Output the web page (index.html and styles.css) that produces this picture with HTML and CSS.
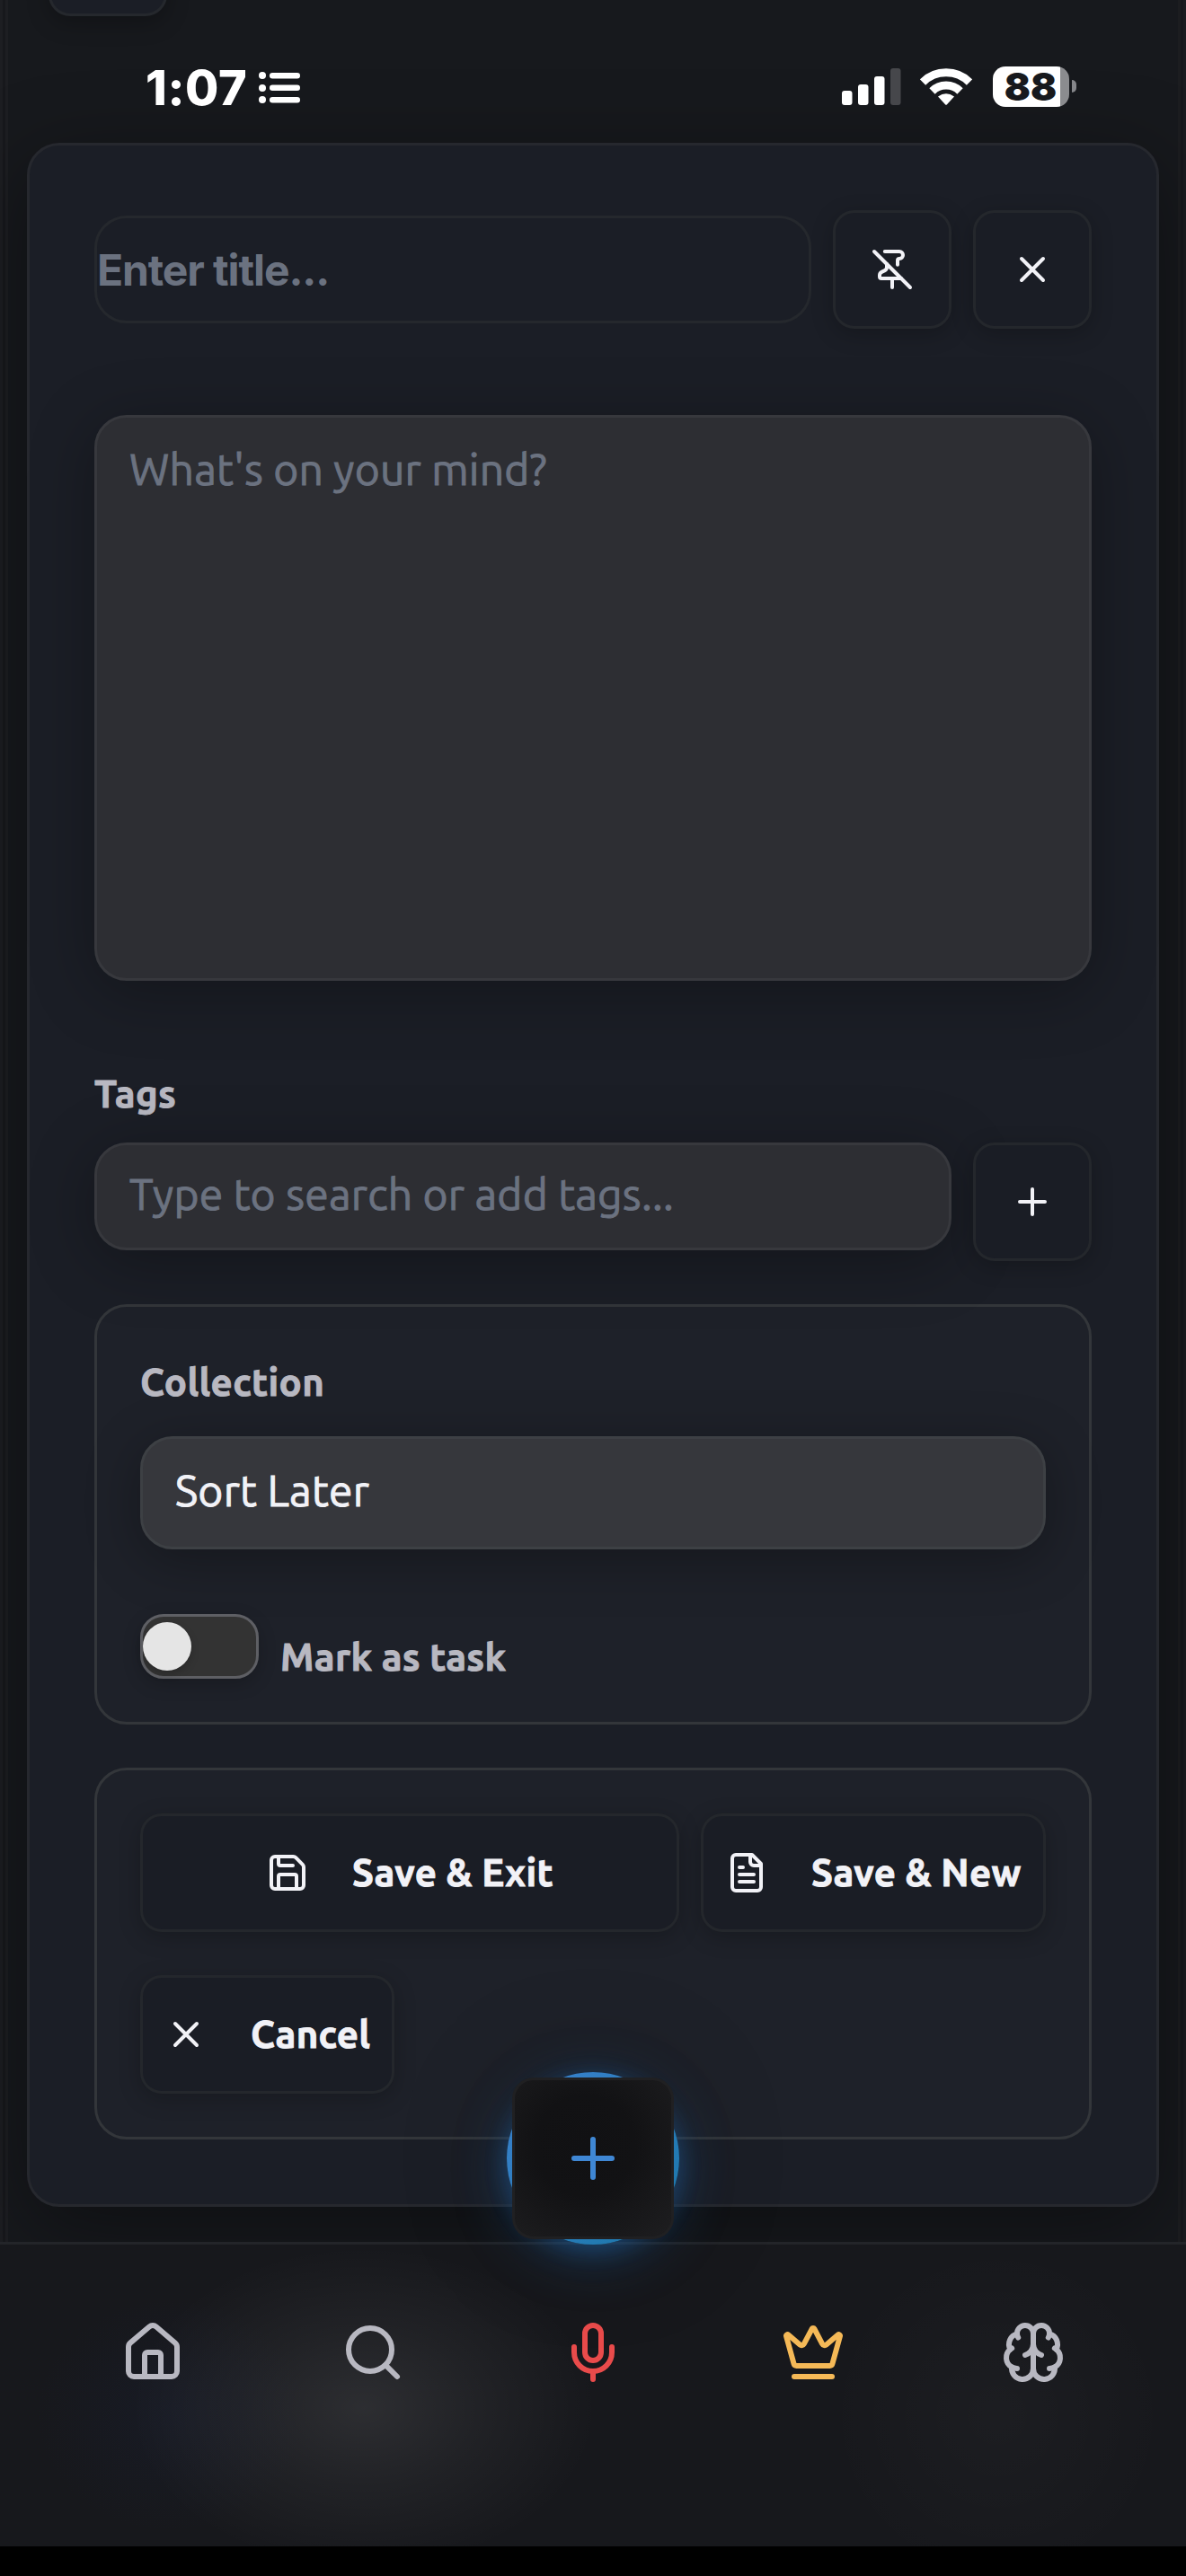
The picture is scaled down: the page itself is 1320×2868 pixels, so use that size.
FILE: index.html
```html
<!DOCTYPE html>
<html lang="en">
<head>
<meta charset="utf-8">
<title>New note</title>
<link rel="stylesheet" href="styles.css">
</head>
<body>
<div class="screen">
  <div class="back-button"></div>
  <header class="status">
    <span class="clock">1:07</span>
    <svg class="list-icon" width="46" height="36" viewBox="0 0 46 36" fill="#fff"><circle cx="4" cy="4" r="4"/><circle cx="4" cy="18" r="4"/><circle cx="4" cy="31" r="4"/><rect x="12" y="1" width="34" height="6.500" rx="3.200"/><rect x="12" y="14.500" width="34" height="6.500" rx="3.200"/><rect x="12" y="28" width="34" height="6.500" rx="3.200"/></svg>
    <svg class="signal" width="66" height="42" viewBox="0 0 66 42" fill="#fff"><rect x="0" y="26" width="11.500" height="16" rx="3"/><rect x="18" y="19" width="11.500" height="23" rx="3"/><rect x="36" y="10" width="11.500" height="32" rx="3"/><rect x="54" y="1" width="11.500" height="41" rx="3" fill="#46474b"/></svg>
    <svg class="wifi" width="58" height="42" viewBox="0 0 58 42"><path d="M3 16.500 A37 37 0 0 1 55 16.500" fill="none" stroke="#fff" stroke-width="9"/><path d="M13.500 26.500 A22 22 0 0 1 44.500 26.500" fill="none" stroke="#fff" stroke-width="9"/><path d="M20 32.500 Q29 26 38 32.500 L30 41.200 Q29 42.200 28 41.200Z" fill="#fff"/></svg>
    <span class="battery">88</span><span class="battery-nub"></span>
  </header>

  <main class="modal">
    <div class="title-row">
      <div class="title-input"><span>Enter title...</span></div>
      <button class="btn square"><svg class="icon" viewBox="0 0 24 24"><path d="M12 17v5"/><path d="M15 9.340V7a1 1 0 0 1 1-1 2 2 0 0 0 0-4H7.890"/><path d="m2 2 20 20"/><path d="M9 9v1.760a2 2 0 0 1-1.110 1.790l-1.780.9A2 2 0 0 0 5 15.240V16a1 1 0 0 0 1 1h11"/></svg></button>
      <button class="btn square"><svg class="icon" viewBox="0 0 24 24"><path d="M18 6 6 18M6 6l12 12"/></svg></button>
    </div>
    <div class="textarea">What's on your mind?</div>
    <div class="label tags-label">Tags</div>
    <div class="tag-row">
      <div class="field">Type to search or add tags...</div>
      <button class="btn square"><svg class="icon" viewBox="0 0 24 24"><path d="M5 12h14M12 5v14"/></svg></button>
    </div>
    <section class="card collection">
      <div class="label">Collection</div>
      <div class="select">Sort Later</div>
      <div class="task-row">
        <span class="toggle"><span class="knob"></span></span>
        <span class="label task-label">Mark as task</span>
      </div>
    </section>
    <section class="card actions">
      <button class="btn save-exit"><svg class="icon" viewBox="0 0 24 24"><path d="M15.200 3a2 2 0 0 1 1.400.6l3.800 3.800a2 2 0 0 1 .6 1.400V19a2 2 0 0 1-2 2H5a2 2 0 0 1-2-2V5a2 2 0 0 1 2-2z"/><path d="M17 21v-7a1 1 0 0 0-1-1H8a1 1 0 0 0-1 1v7"/><path d="M7 3v4a1 1 0 0 0 1 1h7"/></svg><span>Save &amp; Exit</span></button>
      <button class="btn save-new"><svg class="icon" viewBox="0 0 24 24"><path d="M15 2H6a2 2 0 0 0-2 2v16a2 2 0 0 0 2 2h12a2 2 0 0 0 2-2V7Z"/><path d="M14 2v4a2 2 0 0 0 2 2h4"/><path d="M10 9H8M16 13H8M16 17H8"/></svg><span>Save &amp; New</span></button>
      <button class="btn cancel"><svg class="icon" viewBox="0 0 24 24"><path d="M18 6 6 18M6 6l12 12"/></svg><span>Cancel</span></button>
    </section>
  </main>

  <nav class="nav">
    <a><svg class="nav-icon" viewBox="0 0 24 24"><path d="M15 21v-8a1 1 0 0 0-1-1h-4a1 1 0 0 0-1 1v8"/><path d="M3 10a2 2 0 0 1 .709-1.528l7-5.999a2 2 0 0 1 2.582 0l7 5.999A2 2 0 0 1 21 10v9a2 2 0 0 1-2 2H5a2 2 0 0 1-2-2z"/></svg></a>
    <a><svg class="nav-icon" viewBox="0 0 24 24"><circle cx="11" cy="11" r="8"/><path d="m21 21-4.300-4.300"/></svg></a>
    <a><svg class="nav-icon mic" viewBox="0 0 24 24"><path d="M12 2a3 3 0 0 0-3 3v7a3 3 0 0 0 6 0V5a3 3 0 0 0-3-3Z"/><path d="M19 10v2a7 7 0 0 1-14 0v-2"/><path d="M12 19v3"/></svg></a>
    <a><svg class="nav-icon crown" viewBox="0 0 24 24"><path d="M11.562 3.266a.5.5 0 0 1 .876 0L15.390 8.870a1 1 0 0 0 1.516.294L21.183 5.500a.5.5 0 0 1 .798.519l-2.834 10.246a1 1 0 0 1-.956.734H5.810a1 1 0 0 1-.957-.734L2.020 6.020a.5.5 0 0 1 .798-.519l4.276 3.664a1 1 0 0 0 1.516-.294z"/><path d="M5 21h14"/></svg></a>
    <a><svg class="nav-icon" viewBox="0 0 24 24"><path d="M12 5a3 3 0 1 0-5.997.125 4 4 0 0 0-2.526 5.770 4 4 0 0 0 .556 6.588A4 4 0 1 0 12 18Z"/><path d="M12 5a3 3 0 1 1 5.997.125 4 4 0 0 1 2.526 5.770 4 4 0 0 1-.556 6.588A4 4 0 1 1 12 18Z"/><path d="M15 13a4.500 4.500 0 0 1-3-4 4.500 4.500 0 0 1-3 4"/><path d="M17.599 6.500a3 3 0 0 0 .399-1.375"/><path d="M6.003 5.125A3 3 0 0 0 6.401 6.500"/><path d="M3.477 10.896a4 4 0 0 1 .585-.396"/><path d="M19.938 10.500a4 4 0 0 1 .585.396"/><path d="M6 18a4 4 0 0 1-1.967-.516"/><path d="M19.967 17.484A4 4 0 0 1 18 18"/></svg></a>
  </nav>
  <div class="fab"><div class="fab-face"><svg viewBox="0 0 24 24"><path d="M5 12h14M12 5v14"/></svg></div></div>
</div>
</body>
</html>
```

FILE: styles.css
```css
* { box-sizing: border-box; }
body { margin: 0; background: #000; font-family: Ubuntu, "Noto Sans", sans-serif; }
.screen {
  position: relative; width: 1320px; height: 2835px; overflow: hidden;
  display: flex; flex-direction: column;
  background: linear-gradient(90deg, #1d1e22 0 3px, #17181c 3px 6px, #1d1e22 6px 9px, #17191d 9px 1311px, #1c1d20 1311px 1314px, #17181c 1314px 1317px, #1b1c20 1317px);
}
.back-button {
  position: absolute; left: 54px; top: -114px; width: 132px; height: 132px;
  background: #1b1e26; border: 3px solid #25282d; border-radius: 24px;
  box-shadow: 0 8px 24px rgba(0,0,0,.25);
}
.status { height: 159px; display: flex; align-items: flex-start; flex: none; padding-left: 162px; position: relative; z-index: 1; }
.clock { font: 800 54px/54px Inter, sans-serif; color: #fff; width: 126px; margin-top: 71px; letter-spacing: .6px; white-space: nowrap; }
.list-icon { margin-top: 80px; }
.signal { margin: 75px 0 0 603px; }
.wifi { margin: 75px 0 0 21px; }
.battery {
  width: 85px; height: 45px; margin: 74px 0 0 23px; border-radius: 14px; padding-right: 1px;
  background: linear-gradient(90deg, #fff 75px, #8b8c8f 75px);
  color: #17191d; font: 900 43px/45px Inter, sans-serif; text-align: center;
}
.battery-nub { width: 5px; height: 14px; margin: 89px 0 0 3px; background: #85868a; border-radius: 0 5px 5px 0; }
.modal {
  width: 1260px; height: 2298px; margin-left: 30px; flex: none; padding: 72px;
  background: #1b1e26; border: 3px solid #26282e; border-radius: 36px;
  box-shadow: 0 24px 96px rgba(0,0,0,.4);
}
.title-row { display: flex; gap: 24px; align-items: center; }
.title-input { flex: 1; height: 120px; border: 3px solid #25282d; border-radius: 36px; display: flex; align-items: center; }
.title-input span { font: 700 48px/56px Inter, sans-serif; letter-spacing: -1.1px; color: #6b7280; white-space: nowrap; padding-top: 2px; }
.btn {
  height: 132px; margin: 0; padding: 0 24px; display: flex; align-items: center; justify-content: center; gap: 48px;
  background: #1a1d25; border: 3px solid #24272c; border-radius: 24px; color: #f2f2f7;
  font: 700 42px/56px Ubuntu, "Noto Sans", sans-serif; letter-spacing: .35px; -webkit-text-stroke: .9px; white-space: nowrap;
  box-shadow: 0 6px 24px rgba(0,0,0,.22);
}
.square { width: 132px; }
.icon { width: 48px; height: 48px; flex: none; fill: none; stroke: currentColor; stroke-width: 2; stroke-linecap: round; stroke-linejoin: round; }
.textarea, .field {
  background: #2d2e33; border: 3px solid #37383d; border-radius: 36px; padding-left: 36px;
  color: #6b7280; box-shadow: 0 12px 72px rgba(0,0,0,.3);
}
.textarea, .field, .select { font-size: 48px; line-height: 64px; letter-spacing: .22px; -webkit-text-stroke: .9px; white-space: nowrap; }
.textarea { height: 630px; margin-top: 96px; padding-top: 25px; }
.label { color: #b8b8c1; font-weight: 700; font-size: 42px; line-height: 56px; letter-spacing: .35px; -webkit-text-stroke: .9px; white-space: nowrap; }
.tags-label { margin-top: 98px; height: 82px; }
.tag-row { display: flex; gap: 24px; height: 132px; align-items: flex-start; position: relative; z-index: 1; }
.field { flex: 1; height: 120px; padding-top: 22px; }
.tag-row, .card { flex: none; }
.card { border: 3px solid #33363a; border-radius: 36px; background: #1e2129; padding: 48px; }
.collection { height: 468px; margin-top: 48px; }
.collection > .label { padding-top: 8px; height: 96px; }
.select {
  height: 126px; background: #36373c; border: 3px solid #3d4044; border-radius: 36px; padding: 25px 0 0 36px;
  color: #f2f2f7; box-shadow: 0 12px 60px rgba(0,0,0,.3);
}
.task-row { display: flex; margin-top: 72px; height: 72px; gap: 24px; position: relative; }
.toggle { width: 132px; height: 72px; border: 3px solid #5e5f64; border-radius: 26px; background: #333; display: flex; align-items: center; box-shadow: 0 6px 20px rgba(0,0,0,.2); }
.knob { width: 54px; height: 54px; border-radius: 50%; background: #e5e5e5; box-shadow: 0 4px 10px rgba(0,0,0,.2); }
.task-label { padding-top: 20px; }
.actions { height: 414px; margin-top: 48px; display: grid; grid-template-columns: 600px 384px; gap: 48px 24px; align-content: start; }
.cancel { width: 283px; }
.save-new, .cancel { justify-content: flex-start; }
.nav {
  position: relative; height: 339px; margin-top: 39px; flex: none; padding: 84px 48px 0;
  display: flex; align-items: flex-start; border-top: 3px solid #232529;
  background:
    radial-gradient(ellipse 260px 180px at 405px 182px, rgba(255,255,255,.095), rgba(255,255,255,.045) 50%, rgba(255,255,255,0)),
    radial-gradient(ellipse 150px 130px at 190px 190px, rgba(30,50,110,.1), rgba(30,50,110,0)),
    radial-gradient(ellipse 190px 190px at 1110px 190px, rgba(255,255,255,.025), rgba(255,255,255,0)),
    #17181c;
}
.nav a { flex: 1; display: flex; justify-content: center; }
.nav-icon { width: 72px; height: 72px; fill: none; stroke: #b8b8c1; stroke-width: 2; stroke-linecap: round; stroke-linejoin: round; }
.nav-icon.mic { stroke: #e94b4b; }
.nav-icon.crown { stroke: #f5b957; }
.fab {
  position: absolute; left: 564px; top: 2307px; width: 192px; height: 192px; border-radius: 50%;
  display: flex; align-items: center; justify-content: center;
  background: linear-gradient(135deg, #3b82d0, #1a77a8);
  box-shadow: 0 12px 60px rgba(36,110,185,.42), 0 6px 24px rgba(36,120,200,.3), 0 0 120px rgba(0,0,0,.3);
}
.fab-face {
  width: 180px; height: 180px; border-radius: 24px; border: 3px solid #202022;
  display: flex; align-items: center; justify-content: center;
  background: radial-gradient(circle at 45% 42%, #111113 0, #121214 40%, #1e1e20 100%);
}
.fab svg { width: 72px; height: 72px; fill: none; stroke: #3f87d4; stroke-width: 2; stroke-linecap: round; }
```
